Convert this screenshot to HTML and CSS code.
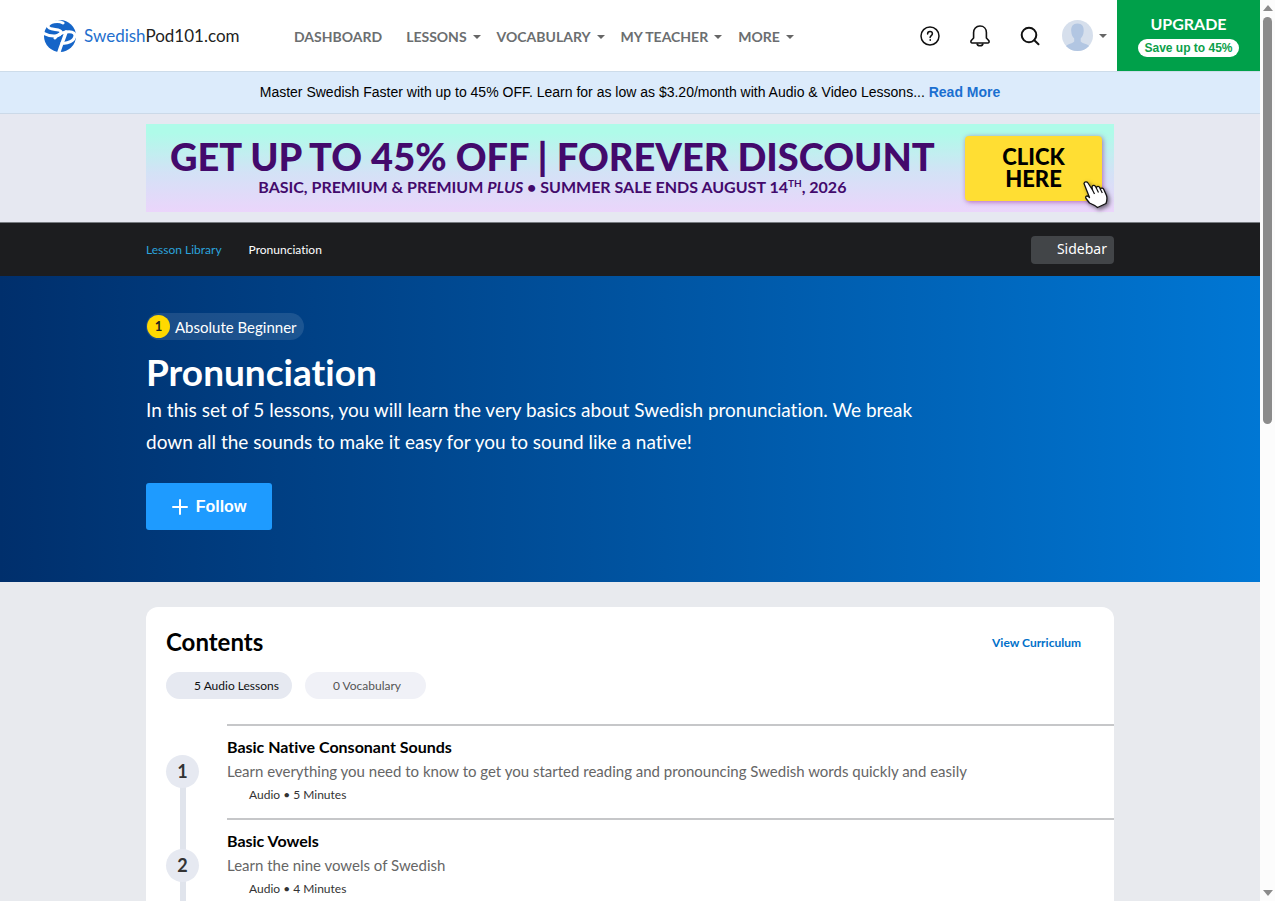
FILE: index.html
```html
<!DOCTYPE html>
<html lang="en">
<head>
    <meta charset="utf-8">
    <title>Pronunciation - SwedishPod101</title>
    <link rel="stylesheet" href="styles.css">
</head>
<body>
<div class="page">
    <header class="header">
        <a class="logo" href="#">
            <svg width="34" height="34" viewBox="0 0 34 34">
                <circle cx="17" cy="17" r="16" fill="#1565c8"/>
                <g fill="none" stroke="#fff" stroke-linecap="round" stroke-linejoin="round">
                    <path d="M20 4C15 1 6 3 5 7c0 5 13 2 13 6 0 5-11 5-18 1" stroke-width="3"/>
                    <path d="M23 13c-2 7-5 13-7 20" stroke-width="3.400"/>
                    <path d="M12 19c4-6 19-9 20-3 0 6-8 9-13 8" stroke-width="3"/>
                </g>
            </svg>
            <span class="logo-text"><span class="logo-lang">Swedish</span>Pod101.com</span>
        </a>
        <nav class="nav">
            <a class="nav-first" href="#">DASHBOARD</a>
            <a href="#">LESSONS <i class="caret"></i></a>
            <a href="#">VOCABULARY <i class="caret"></i></a>
            <a href="#">MY TEACHER <i class="caret"></i></a>
            <a href="#">MORE <i class="caret"></i></a>
        </nav>
        <div class="tools">
            <button type="button" aria-label="Help">
                <svg width="20" height="20" viewBox="0 0 20 20" fill="none" stroke="#111" stroke-width="1.5" stroke-linecap="round">
                    <circle cx="10" cy="10" r="9"/>
                    <path d="M7.6 8c0-1.5 1-2.4 2.4-2.4s2.4.9 2.4 2.2c0 1.7-2.3 1.9-2.3 3.7"/>
                    <circle cx="10.1" cy="14" r=".4" fill="#111" stroke-width="1"/>
                </svg>
            </button>
            <button type="button" aria-label="Notifications">
                <svg width="20" height="22" viewBox="0 0 20 22" fill="none" stroke="#111" stroke-width="1.6" stroke-linejoin="round">
                    <path d="M10 1C6 1 3.600 4 3.600 7.500v5.500L1.300 15.500C.5 16.700 1 18 2.300 18h15.400c1.300 0 1.800-1.300 1-2.500L16.400 13V7.500C16.400 4 14 1 10 1z"/>
                    <path d="M7 18.500c.5 3 5.500 3 6 0"/>
                </svg>
            </button>
            <button type="button" aria-label="Search">
                <svg width="20" height="20" viewBox="0 0 20 20" fill="none" stroke="#111" stroke-width="2" stroke-linecap="round">
                    <circle cx="9" cy="9" r="7.300"/>
                    <path d="M14.300 14.300L18.500 18.300"/>
                </svg>
            </button>
            <button type="button" class="account" aria-label="Account">
                <svg width="31" height="31" viewBox="0 0 31 31">
                    <defs><clipPath id="round"><circle cx="15.500" cy="15.500" r="15.500"/></clipPath></defs>
                    <g clip-path="url(#round)">
                        <rect width="31" height="31" fill="#d6dfec"/>
                        <path d="M15.500 3.500c4.500 0 6.500 3 6.200 7.500-.2 4-1.700 6-3 7.500v3c2 2.500 8 2 9.500 6V31h-25v-3.500c1.500-4 7-3.500 9-6v-3c-1.500-1.500-2.700-3.500-3-7.500-.3-4.500 1.800-7.500 6.300-7.500z" fill="#b2c6e2"/>
                    </g>
                </svg>
                <i class="caret"></i>
            </button>
        </div>
        <a class="upgrade" href="#">
            <span>UPGRADE</span>
            <span class="upgrade-save">Save up to 45%</span>
        </a>
    </header>

    <div class="notice">Master Swedish Faster with up to 45% OFF. Learn for as low as $3.20/month with Audio &amp; Video Lessons... <a href="#">Read More</a></div>

    <div class="promo">
        <a class="banner" href="#">
            <span class="banner-text">
                <span class="banner-title">GET UP TO 45% OFF | FOREVER DISCOUNT</span>
                <span class="banner-sub">BASIC, PREMIUM &amp; PREMIUM <em>PLUS</em> • SUMMER SALE ENDS AUGUST 14<sup>TH</sup>, 2026</span>
            </span>
            <span class="banner-button">CLICK<br>HERE
                <svg class="hand" width="28" height="29" viewBox="0 0 28 29">
                    <path d="M2 3.500C2.500 1.500 5 1.500 6 3l4.500 7-.5-3c.5-2 2.500-2 3.500-.5l.8 1.500c.5-2 2.700-2 3.500-.3l.5 1.300c1-1.500 2.800-1 3.500.5l2.700 6c1 3 .5 5-.5 8l-8.500 4c-2-2-4.500-3-8-4.500L4 18.500c-1-2.500 1-3.300 3-1.500l.5.500z" fill="#fff" stroke="#111" stroke-width="1.300" stroke-linejoin="round"/>
                    <path d="M10.500 10l2 4M14.300 8l2.200 4.500M18.300 9l2 4" fill="none" stroke="#111" stroke-width="1.200"/>
                </svg>
            </span>
        </a>
    </div>

    <div class="crumb-bar">
        <div class="container crumbs">
            <a href="#">Lesson Library</a>
            <span>Pronunciation</span>
            <button type="button" class="sidebar-button">Sidebar</button>
        </div>
    </div>

    <section class="hero">
        <div class="container">
            <span class="level"><b>1</b>Absolute Beginner</span>
            <h1>Pronunciation</h1>
            <p>In this set of 5 lessons, you will learn the very basics about Swedish pronunciation. We break down all the sounds to make it easy for you to sound like a native!</p>
            <button type="button" class="follow">
                <svg width="16" height="16" viewBox="0 0 16 16" stroke="#fff" stroke-width="2" stroke-linecap="round"><path d="M8 1v14M1 8h14"/></svg>
                Follow
            </button>
        </div>
    </section>

    <main class="container contents">
        <div class="contents-head">
            <h2>Contents</h2>
            <a href="#">View Curriculum</a>
        </div>
        <div class="pills">
            <span class="pill pill-on">5 Audio Lessons</span>
            <span class="pill">0 Vocabulary</span>
        </div>
        <ol class="lessons">
            <li>
                <span class="number">1</span>
                <div class="lesson">
                    <h3>Basic Native Consonant Sounds</h3>
                    <p>Learn everything you need to know to get you started reading and pronouncing Swedish words quickly and easily</p>
                    <small>Audio • 5 Minutes</small>
                </div>
            </li>
            <li>
                <span class="number">2</span>
                <div class="lesson">
                    <h3>Basic Vowels</h3>
                    <p>Learn the nine vowels of Swedish</p>
                    <small>Audio • 4 Minutes</small>
                </div>
            </li>
        </ol>
    </main>
</div>
<div class="scrollbar">
    <i class="arrow-up"></i>
    <div class="track"><div class="thumb"></div></div>
    <i class="arrow-down"></i>
</div>
</body>
</html>
```

FILE: styles.css
```css
* {box-sizing: border-box;}
body {
    display: grid;
    grid-template-columns: minmax(0, 1fr) 15px;
    height: 100vh;
    margin: 0;
    overflow: hidden;
    background: #e8eaee;
    color: #000;
    font-family: Lato, "Liberation Sans", sans-serif;
    font-variant-ligatures: none;}
a {text-decoration: none; color: #0070c9;}
button {border: 0; padding: 0; background: none; font-family: inherit; cursor: pointer;}
h1, h2, h3, p, ol {margin: 0; padding: 0;}
svg {display: block; flex: none;}

.page {height: 100vh; overflow: hidden;}
.container {width: 100%; max-width: 968px; margin: 0 auto;}
.caret {
    display: inline-block;
    border: 4px solid transparent;
    border-top-color: #666;
    border-bottom: 0;}

/* header */
.header {display: flex; align-items: center; height: 71px; background: #fff;}
.logo {display: flex; align-items: center; gap: 7px; width: 251px; margin-left: 43px; color: #222;}
.logo-text {font-size: 17px; white-space: nowrap;}
.logo-lang {color: #1f6fce;}
.nav {display: flex; gap: 16px; padding-top: 2px; font-size: 14px; font-weight: bold; white-space: nowrap;}
.nav a {display: flex; align-items: center; gap: 6px; color: #6b6e70;}
.nav .nav-first {margin-right: 8px;}
.tools {display: flex; align-items: center; gap: 30px; margin-left: auto; padding-right: 10px;}
.account {display: flex; align-items: center; gap: 6px; margin-left: -8px;}
.upgrade {
    display: flex;
    flex-direction: column;
    align-items: center;
    justify-content: center;
    gap: 5px;
    width: 143px;
    height: 71px;
    padding-bottom: 1px;
    background: #00a04a;
    color: #fff;
    font-size: 16px;
    line-height: 20px;
    font-weight: bold;}
.upgrade-save {
    padding: 0 6px;
    border-radius: 9px;
    background: #fff;
    color: #0d9f4b;
    font: bold 12px/18px "Liberation Sans", sans-serif;}

.notice {
    height: 43px;
    border-top: 1px solid #cddcea;
    border-bottom: 1px solid #cbd9e8;
    background: #dcebfb;
    font: 14px/40px "Liberation Sans", sans-serif;
    text-align: center;}
.notice a {font-weight: bold; color: #1a6fd0;}

/* sale banner */
.promo {padding: 10px 0; background: #e6e8f1;}
.banner {
    display: flex;
    align-items: center;
    justify-content: space-between;
    max-width: 968px;
    height: 88px;
    margin: 0 auto;
    padding: 0 12px 0 24px;
    background: linear-gradient(#affbe9 10%, #d3e2f6 55%, #ebd5fb);
    color: #430a6c;}
.banner-text {display: flex; flex-direction: column; align-items: center; padding-bottom: 4px; white-space: nowrap;}
.banner-title {font-size: 38px; line-height: 42px; font-weight: 900;}
.banner-sub {font-size: 16px; line-height: 20px; font-weight: bold;}
.banner-sub sup {font-size: 10px; line-height: 0;}
.banner-button {
    position: relative;
    width: 137px;
    padding: 10px 0 11px;
    border-radius: 4px;
    background: #ffde33;
    box-shadow: 1px 1px 5px #8088;
    color: #000;
    font-size: 22px;
    line-height: 22px;
    font-weight: 900;
    text-align: center;}
.hand {position: absolute; right: -8px; bottom: -8px; filter: drop-shadow(2px 2px 2px #0008);}

/* breadcrumbs */
.crumb-bar {border-top: 1px solid #777b80; background: #1c1d1f;}
.crumbs {display: flex; align-items: center; gap: 27px; height: 53px; font-size: 12px; color: #fff;}
.crumbs a {color: #2ba3dc;}
.sidebar-button {
    width: 83px;
    height: 28px;
    margin-left: auto;
    padding: 0 7px 2px 0;
    border-radius: 4px;
    background: #424548;
    color: #fff;
    font: 14px "Noto Sans", sans-serif;
    text-align: right;}

/* hero */
.hero {height: 306px; padding-top: 37px; background: linear-gradient(90deg, #002f6c, #0077d4); color: #fff;}
.level {
    display: inline-flex;
    align-items: center;
    gap: 5px;
    height: 27px;
    padding: 0 7px 0 1px;
    border-radius: 14px;
    background: #ffffff1c;
    font-size: 15px;}
.level b {
    width: 23px;
    border-radius: 50%;
    background: #ffd900;
    color: #222;
    font-size: 13px;
    line-height: 23px;
    text-align: center;}
.hero h1 {margin-top: 10px; font-size: 37px; line-height: 44px;}
.hero p {max-width: 774px; font-size: 19px; line-height: 32px;}
.follow {
    display: flex;
    align-items: center;
    justify-content: center;
    gap: 8px;
    width: 126px;
    height: 47px;
    margin-top: 25px;
    border-radius: 3px;
    background: #1e9bff;
    color: #fff;
    font: bold 16px "Liberation Sans", sans-serif;}

/* contents */
.contents {margin-top: 25px; padding-left: 20px; min-height: 700px; border-radius: 12px; background: #fff;}
.contents-head {display: flex; align-items: center; justify-content: space-between; padding: 20px 33px 0 0;}
.contents-head h2 {font-size: 24px; line-height: 30px;}
.contents-head a {font-size: 12px; font-weight: bold;}
.pills {display: flex; gap: 13px; margin-top: 15px; font-size: 12px; line-height: 27px;}
.pill {padding: 0 25px 0 28px; border-radius: 14px; background: #f0f1f7; color: #555;}
.pill-on {padding-right: 13px; background: #e6e9f1; color: #111;}
.lessons {margin-top: 25px; list-style: none;}
.lessons li {display: flex; align-items: center; gap: 28px; position: relative;}
.number {
    position: relative;
    width: 33px;
    border-radius: 50%;
    background: #e6e9f1;
    color: #333;
    font-size: 18px;
    line-height: 33px;
    font-weight: bold;
    text-align: center;}
/* line that joins one number to the next */
.lessons li::before {
    content: "";
    position: absolute;
    left: 14px;
    top: 50%;
    width: 6px;
    height: 100%;
    background: #e0e4ec;}
.lesson {flex: 1; padding: 9px 0 13px; border-top: 2px solid #c6c7c9;}
.lesson h3 {font-size: 16px; line-height: 24px;}
.lesson p {color: #666; font-size: 15px; line-height: 24px;}
.lesson small {display: block; padding: 2px 0 0 22px; color: #333; font-size: 12px; line-height: 20px;}

/* scrollbar */
.scrollbar {
    display: flex;
    flex-direction: column;
    align-items: center;
    padding: 5px 0;
    background: #fcfcfc;}
.track {flex: 1; width: 9px; margin: 6px 0;}
.thumb {height: 47%; border-radius: 5px; background: #8b8b8b;}
.arrow-up {border: 5px solid transparent; border-top: 0; border-bottom: 6px solid #8b8b8b;}
.arrow-down {border: 5px solid transparent; border-bottom: 0; border-top: 6px solid #8b8b8b;}
```
